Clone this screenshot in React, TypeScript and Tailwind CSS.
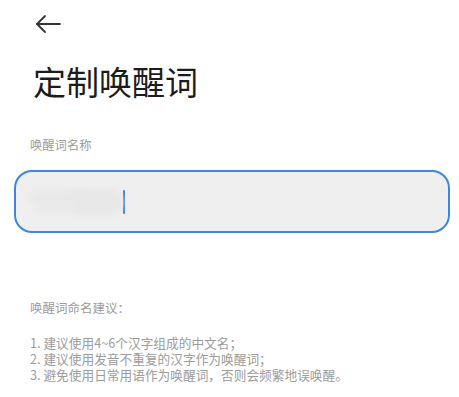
import React from "react";

export default function App() {
  return (
    <div className="w-[459px] h-[397px] bg-white overflow-hidden" style={{ fontFamily: '"Noto Sans CJK SC", "Noto Sans", sans-serif' }}>
      <div className="pt-[14px] pl-[34px]">
        <svg width="28" height="20" viewBox="0 0 28 20" fill="none" stroke="#333" strokeWidth="1.8" strokeLinecap="round" strokeLinejoin="round">
          <path d="M26 10H3" />
          <path d="M11 2L3 10L11 18" />
        </svg>
      </div>
      <h1 className="mt-[27px] pl-[33px] text-[33px] leading-[40px] text-[#1c1c1c] font-normal">定制唤醒词</h1>
      <div className="mt-[36px] pl-[30px] text-[12.3px] leading-[16px] text-[#9c9c9c]">唤醒词名称</div>
      <div className="mt-[17px] mx-[14px] w-[436px] h-[63px] rounded-[18px] border-2 border-[#3f86e0] bg-[#efefef] flex items-center pl-[12px]">
        <div className="relative w-[95px] h-[30px]">
          <div className="absolute left-[2px] top-[3px] w-[56px] h-[14px] rounded-full bg-[#e9e9e9] blur-[2px]" />
          <div className="absolute left-[40px] top-[2px] w-[55px] h-[26px] rounded-full bg-[#e8e8e8] blur-[2px]" />
          <div className="absolute left-[8px] top-[14px] w-[40px] h-[12px] rounded-full bg-[#eaeaea] blur-[2px]" />
        </div>
        <div className="w-[2px] h-[24px] bg-[#3f86e0] rounded-full" />
      </div>
      <div className="mt-[67px] pl-[30px] text-[12.5px] leading-[16px] text-[#9c9c9c]">唤醒词命名建议：</div>
      <div className="mt-[19px] pl-[30px] text-[12.7px] leading-[16px] text-[#9c9c9c]">
        <div>1. 建议使用4~6个汉字组成的中文名；</div>
        <div>2. 建议使用发音不重复的汉字作为唤醒词；</div>
        <div>3. 避免使用日常用语作为唤醒词，否则会频繁地误唤醒。</div>
      </div>
    </div>
  );
}
